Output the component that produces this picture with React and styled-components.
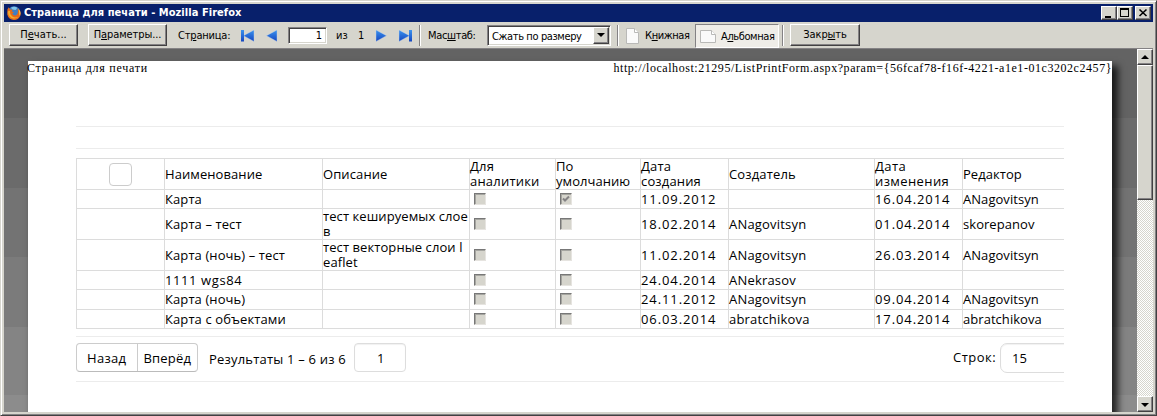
import React from "react";
import styled, { createGlobalStyle, css } from "styled-components";

const face = "#d6d5cd";
const line = "#dcdcdc";

const Global = createGlobalStyle`
  * { box-sizing: border-box; }
  body { margin: 0; background: ${face}; overflow: hidden; }
`;

const raised = css`
  background: ${face};
  border: 1px solid;
  border-color: #fff #424142 #424142 #fff;
  box-shadow: inset -1px -1px 0 #848284;
`;

const sunken = css`
  border: 1px solid;
  border-color: #848284 #fff #fff #848284;
  box-shadow: inset 1px 1px 0 #424142, inset -1px -1px 0 ${face};
`;

const Window = styled.div`
  width: 1157px;
  height: 416px;
  padding: 3px;
  display: flex;
  flex-direction: column;
  background: ${face};
  border: 1px solid;
  border-color: ${face} #424142 #424142 ${face};
  box-shadow: inset 1px 1px 0 #fff, inset -1px -1px 0 #848284;
`;

const TitleBar = styled.div`
  height: 18px;
  flex: none;
  display: flex;
  align-items: center;
  padding: 0 2px 0 3px;
  background: #08206b;
  color: #fff;
  font: bold 11px/18px "DejaVu Sans Condensed", "DejaVu Sans", sans-serif;
`;

const Title = styled.span`
  flex: 1;
  margin-left: 3px;
  white-space: nowrap;
  letter-spacing: ${(p) => p.$ls}px;
`;

const CaptionButton = styled.div`
  ${raised}
  width: 16px;
  height: 14px;
  margin-left: ${(p) => p.$gap || 0}px;
  svg { display: block; }
`;

const Toolbar = styled.div`
  height: 27px;
  flex: none;
  display: flex;
  align-items: flex-start;
  padding: 2px 0 0 5px;
  border-bottom: 1px solid #848284;
  color: #000;
  font: 11px/20px "DejaVu Sans Condensed", "DejaVu Sans", sans-serif;
  white-space: nowrap;
`;

const Button = styled.div`
  ${raised}
  flex: none;
  width: ${(p) => p.$w}px;
  height: 22px;
  margin-right: ${(p) => p.$after || 0}px;
  text-align: center;
  letter-spacing: ${(p) => p.$ls || 0}px;
`;

const Label = styled.span`
  flex: none;
  width: ${(p) => p.$w}px;
  padding-top: 2px;
  letter-spacing: ${(p) => p.$ls || 0}px;
`;

const Arrow = styled.svg`
  flex: none;
  display: block;
  width: ${(p) => p.$w}px;
  height: 14px;
  margin: 5px ${(p) => p.$after}px 0 0;
`;

const PageInput = styled.div`
  ${sunken}
  flex: none;
  width: 39px;
  height: 17px;
  margin: 3px 9px 0 0;
  padding-right: 4px;
  background: #fff;
  text-align: right;
  line-height: 16px;
`;

const Separator = styled.div`
  flex: none;
  width: 2px;
  height: 21px;
  margin: 1px ${(p) => p.$after}px 0 0;
  background: linear-gradient(90deg, #848284 50%, #fff 50%);
`;

const Select = styled.div`
  ${sunken}
  flex: none;
  display: flex;
  justify-content: space-between;
  width: 124px;
  height: 21px;
  margin: 1px 6px 0 0;
  padding: 1px 1px 1px 4px;
  background: #fff;
  line-height: 19px;
  letter-spacing: ${(p) => p.$ls || 0}px;
`;

const DropArrow = styled.div`
  ${raised}
  width: 16px;
  height: 17px;
  svg { display: block; }
`;

const Toggle = styled.div`
  flex: none;
  display: flex;
  height: 24px;
  width: ${(p) => p.$w}px;
  padding-left: ${(p) => p.$pad}px;
  margin-right: ${(p) => p.$after || 0}px;
  letter-spacing: ${(p) => p.$ls || 0}px;
  border: 1px solid transparent;
  line-height: ${(p) => (p.$on ? 24 : 22)}px;
  ${(p) =>
    p.$on &&
    css`
      background: #efede8;
      border-color: #848284 #fff #fff #848284;
    `}
  svg { display: block; flex: none; margin: ${(p) => (p.$on ? 4 : 3)}px ${(p) => p.$gap}px 0 0; }
`;

const Preview = styled.div`
  flex: 1;
  min-height: 0;
  display: flex;
`;

const Canvas = styled.div`
  flex: 1;
  min-width: 0;
  overflow: hidden;
  padding: 12px 0 0 24px;
  background: linear-gradient(
    #636363 69px, #6b6b6b 69px 139px, #737373 139px 208px,
    #7b7b7b 208px 278px, #848484 278px 346px, #8c8c8c 346px
  );
`;

const Sheet = styled.div`
  width: 1084px;
  height: 420px;
  background: #fff;
  color: #000;
  box-shadow: 5px 6px 7px 1px rgba(0, 0, 0, 0.75);
`;

const PageHeader = styled.div`
  height: 65px;
  margin-left: -1px;
  display: flex;
  justify-content: space-between;
  font: 12px/14px "Liberation Serif", serif;
  white-space: nowrap;
`;

const HeaderText = styled.span`
  letter-spacing: ${(p) => p.$ls}px;
`;

const Body = styled.div`
  width: 988px;
  margin-left: 48px;
  overflow: hidden;
  font: 13px/15px "Open Sans", "Noto Sans", sans-serif;
  white-space: nowrap;
`;

const Rule = styled.div`
  height: 1px;
  background: #ececec;
  margin-bottom: ${(p) => p.$after}px;
`;

const Table = styled.div`
  display: grid;
  grid-template-columns: 88px 158px 147px 86px 85px 88px 146px 88px 102px;
  grid-template-rows: 31px 19px 31px 31px 19px 20px 19px;
  border-bottom: 1px solid ${line};
  margin-bottom: 7px;
`;

const Cell = styled.div`
  display: flex;
  align-items: center;
  justify-content: ${(p) => (p.$center ? "center" : "flex-start")};
  border-left: 1px solid ${line};
  border-top: 1px solid ${line};
  letter-spacing: ${(p) => p.$ls}px;
  white-space: pre;
`;

const SelectAll = styled.div`
  width: 23px;
  height: 23px;
  border: 1px solid #ccc;
  border-radius: 4px;
`;

const Check = styled.div`
  width: 12px;
  height: 12px;
  margin: -1px 0 0 4px;
  background: ${face};
  border: 1px solid;
  border-color: #777 #e6e4e0 #e6e4e0 #777;
  box-shadow: inset 1px 1px 0 #a5a5a0;
  svg { display: block; }
`;

const Pager = styled.div`
  display: flex;
  height: 38px;
`;

const ButtonGroup = styled.div`
  display: flex;
  width: 122px;
  height: 29px;
  border: 1px solid #ccc;
  border-bottom-color: #bbb;
  border-radius: 4px;
`;

const PagerButton = styled.div`
  width: ${(p) => p.$w}px;
  text-align: center;
  line-height: 29px;
  letter-spacing: ${(p) => p.$ls}px;
  & + & { border-left: 1px solid #ccc; }
`;

const Results = styled.span`
  width: 145px;
  margin-left: 11px;
  line-height: 32px;
  letter-spacing: ${(p) => p.$ls}px;
`;

const Field = styled.div`
  width: ${(p) => p.$w}px;
  height: ${(p) => p.$h}px;
  flex: none;
  margin-right: ${(p) => p.$overhang ? -p.$overhang : 0}px;
  border: 1px solid #ddd;
  border-radius: ${(p) => p.$r}px;
  padding-left: ${(p) => p.$pad}px;
  line-height: 28px;
  box-shadow: inset 0 1px 1px rgba(0, 0, 0, 0.06);
`;

const RowsLabel = styled.span`
  margin-left: auto;
  width: 47px;
  line-height: 29px;
  letter-spacing: ${(p) => p.$ls}px;
`;

const Scrollbar = styled.div`
  width: 16px;
  display: flex;
  flex-direction: column;
  background: repeating-conic-gradient(#fff 0 25%, ${face} 0 50%) 0 0 / 2px 2px;
`;

const ScrollButton = styled.div`
  ${raised}
  height: 16px;
  flex: none;
  svg { display: block; }
`;

const Thumb = styled.div`
  ${raised}
  height: 135px;
  margin-bottom: auto;
`;

function Firefox() {
  return (
    <svg width="14" height="14" viewBox="0 0 14 14">
      <circle cx="7" cy="6.8" r="6.6" fill="#3f7fc4" />
      <path d="M4 1.8Q7-.4 10.3 1.7L8.6 4 5.5 3.5Z" fill="#7fc5ea" />
      <path d="M.4 3.5Q1.2 2.3 1.8 1.2L3 3.4 5.6 3.8 4.8 5.6 7 6.3 5.2 7.6Q6 10 9 9.2 12 8 10.5 2.2 14.7 5 13.4 9.5 11.5 14 7 14 1.5 13.7.3 8.5Z" fill="#e76a18" />
      <path d="M1.2 5Q.4 10 4.6 12 9 13.6 12 10.5 8.3 12.5 5 10.2 2.6 8.4 3 5Z" fill="#f5ae2a" />
      <path d="M11.4 3Q14.6 6 12.5 10 12.7 6 11.4 3Z" fill="#ffe055" />
    </svg>
  );
}

function NavArrow({ back, end, after }) {
  const w = end ? 15 : 12;
  return (
    <Arrow $w={w} $after={after} viewBox={`0 0 ${w} 14`}>
      <defs>
        <linearGradient id="nav" x1="0" y1="0" x2="0" y2="1">
          <stop offset="0" stopColor="#3b93ee" />
          <stop offset="1" stopColor="#1446c0" />
        </linearGradient>
      </defs>
      <g transform={back ? `translate(${w} 0) scale(-1 1)` : undefined}>
        <path d="M1 1V12.500L11.500 6.700Z" fill="url(#nav)" stroke="#c3d3ea" strokeWidth=".4" />
        {end && <rect x="11" y="1" width="3" height="11.500" fill="url(#nav)" />}
      </g>
    </Arrow>
  );
}

function Paper({ landscape }) {
  const w = landscape ? 16 : 13;
  const h = landscape ? 13 : 16;
  return (
    <svg width={w} height={h + (landscape ? 2 : 0)} viewBox={`0 ${landscape ? -1 : 0} ${w} ${h + (landscape ? 2 : 0)}`}>
      <path d={`M.5.5H${w - 4.5}L${w - 0.5} 4.5V${h - 0.5}H.5Z`} fill="#fafafa" stroke="#b9b9b7" />
      <path d={`M${w - 4.5}.5V4.5H${w - 0.5}`} fill="#fff" stroke="#b9b9b7" />
    </svg>
  );
}

const columns = [
  ["Наименование", 0.08],
  ["Описание", 0.1],
  ["Для\nаналитики", 0.2],
  ["По\nумолчанию", 0.05],
  ["Дата\nсоздания", 0.15],
  ["Создатель", 0.15],
  ["Дата\nизменения", 0.4],
  ["Редактор", 0.05],
];

const rows = [
  ["Карта", "", false, true, "11.09.2012", "", "16.04.2014", "ANagovitsyn"],
  ["Карта – тест", "тест кешируемых слое\nв", false, false, "18.02.2014", "ANagovitsyn", "01.04.2014", "skorepanov"],
  ["Карта (ночь) – тест", "тест векторные слои l\neaflet", false, false, "11.02.2014", "ANagovitsyn", "26.03.2014", "ANagovitsyn"],
  ["1111 wgs84", "", false, false, "24.04.2014", "ANekrasov", "", ""],
  ["Карта (ночь)", "", false, false, "24.11.2012", "ANagovitsyn", "09.04.2014", "ANagovitsyn"],
  ["Карта с объектами", "", false, false, "06.03.2014", "abratchikova", "17.04.2014", "abratchikova"],
];

const spacing = [0.1, 0.08, 0, 0, 0.9, 0.2, 0.9, 0.05];

function DataTable() {
  return (
    <Table>
      <Cell $center>
        <SelectAll />
      </Cell>
      {columns.map(([name, ls]) => (
        <Cell key={name} $ls={ls}>{name}</Cell>
      ))}
      {rows.map((row) => (
        <React.Fragment key={row[0]}>
          <Cell />
          {row.map((value, i) => (
            <Cell key={i} $ls={value === "1111 wgs84" ? 0.6 : spacing[i]}>
              {typeof value === "boolean" ? (
                <Check>
                  {value && (
                    <svg width="10" height="10" viewBox="0 0 10 10">
                      <path d="M2 4.5L4 6.5L8 2.5" fill="none" stroke="#848284" strokeWidth="2" />
                    </svg>
                  )}
                </Check>
              ) : (
                value
              )}
            </Cell>
          ))}
        </React.Fragment>
      ))}
    </Table>
  );
}

export default function App() {
  return (
    <Window>
      <Global />
      <TitleBar>
        <Firefox />
        <Title $ls={0.05}>Страница для печати - Mozilla Firefox</Title>
        <CaptionButton>
          <svg width="14" height="12"><path d="M3 9h6v2H3z" /></svg>
        </CaptionButton>
        <CaptionButton>
          <svg width="14" height="12"><path d="M2 1h9v9H2zM3 3v6h7V3z" fillRule="evenodd" /></svg>
        </CaptionButton>
        <CaptionButton $gap={2}>
          <svg width="14" height="12"><path d="M3.5 2.5l7 6.5M10.5 2.5l-7 6.5" stroke="#000" strokeWidth="1.6" /></svg>
        </CaptionButton>
      </TitleBar>
      <Toolbar>
        <Button $w={69} $after={10}>П<u>е</u>чать...</Button>
        <Button $w={79} $after={11} $ls={-0.1}>П<u>а</u>раметры...</Button>
        <Label $w={62} $ls={-0.2}>Ст<u>р</u>аница:</Label>
        <NavArrow back end after={11} />
        <NavArrow back after={10} />
        <PageInput>1</PageInput>
        <Label $w={22}>из</Label>
        <Label $w={17}>1</Label>
        <NavArrow after={11} />
        <NavArrow end after={6} />
        <Separator $after={7} />
        <Label $w={59} $ls={-0.35}>Мас<u>ш</u>таб:</Label>
        <Select $ls={-0.38}>
          Сжать по размеру
          <DropArrow>
            <svg width="14" height="15"><path d="M3 5h8L7 9z" /></svg>
          </DropArrow>
        </Select>
        <Separator $after={6} />
        <Toggle $w={70} $pad={0} $gap={6} $ls={-0.4}>
          <Paper />
          <span>К<u>н</u>ижная</span>
        </Toggle>
        <Toggle $on $w={84} $pad={4} $gap={5} $after={3} $ls={-0.4}>
          <Paper landscape />
          <span>А<u>л</u>ьбомная</span>
        </Toggle>
        <Separator $after={6} />
        <Button $w={70} $ls={-0.1}>Закр<u>ы</u>ть</Button>
      </Toolbar>
      <Preview>
        <Canvas>
          <Sheet>
            <PageHeader>
              <HeaderText $ls={0.73}>Страница для печати</HeaderText>
              <HeaderText $ls={0.55}>
                {"http://localhost:21295/ListPrintForm.aspx?param={56fcaf78-f16f-4221-a1e1-01c3202c2457}"}
              </HeaderText>
            </PageHeader>
            <Body>
              <Rule $after={21} />
              <Rule $after={9} />
              <DataTable />
              <Rule $after={6} />
              <Pager>
                <ButtonGroup>
                  <PagerButton $w={60} $ls={0.3}>Назад</PagerButton>
                  <PagerButton $w={61} $ls={0.2}>Вперёд</PagerButton>
                </ButtonGroup>
                <Results $ls={0.2}>Результаты 1 – 6 из 6</Results>
                <Field $w={52} $h={29} $r={4} $pad={22}>1</Field>
                <RowsLabel $ls={0.5}>Строк:</RowsLabel>
                <Field $w={80} $h={30} $r={7} $pad={11} $overhang={16}>15</Field>
              </Pager>
              <Rule $after={0} />
            </Body>
          </Sheet>
        </Canvas>
        <Scrollbar>
          <ScrollButton>
            <svg width="14" height="14"><path d="M3 9h8L7 5z" /></svg>
          </ScrollButton>
          <Thumb />
          <ScrollButton>
            <svg width="14" height="14"><path d="M3 6h8L7 10z" /></svg>
          </ScrollButton>
        </Scrollbar>
      </Preview>
    </Window>
  );
}
